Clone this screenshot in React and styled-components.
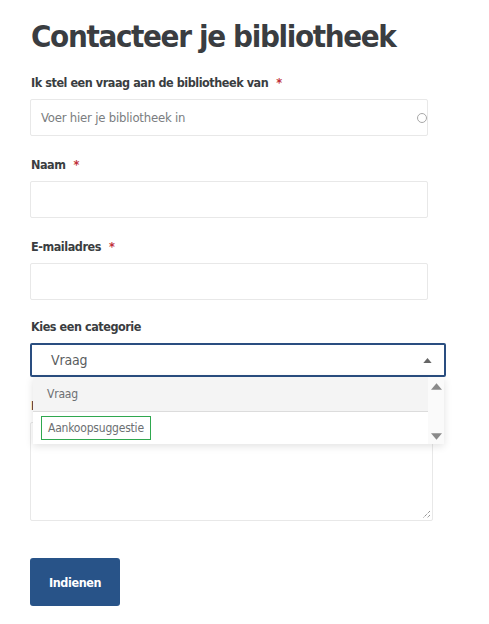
import React from "react";
import styled, { createGlobalStyle } from "styled-components";

const Global = createGlobalStyle`
  html, body { margin: 0; padding: 0; background: #fff; }
  body { font-family: "DejaVu Sans Condensed", "DejaVu Sans", sans-serif; color: #3a3d41; }
  * { box-sizing: border-box; }
`;

const Page = styled.div`
  padding: 15px 0 0 30px;
  width: 489px;
`;

const Title = styled.h1`
  margin: 0 0 0 1px;
  font-size: 31px;
  line-height: 42px;
  letter-spacing: -1.35px;
  font-weight: 700;
  color: #3a3d41;
`;

const Form = styled.form`
  display: flex;
  flex-direction: column;
  margin-top: 18px;
`;

const Field = styled.div`
  display: flex;
  flex-direction: column;
  margin-bottom: ${p => p.$gap ?? 21}px;
  position: relative;
`;

const Label = styled.label`
  font-size: 12.5px;
  line-height: 16px;
  letter-spacing: -0.45px;
  font-weight: 700;
  color: #3a3d41;
  margin: 0 0 8px 1px;
`;

const Req = styled.span`
  color: #c0303a;
  margin-left: 8px;
`;

const InputBox = styled.div`
  width: 398px;
  height: 37px;
  border: 1px solid #e8e8e8;
  border-radius: 2px;
  display: flex;
  align-items: center;
  padding: 0 10px;
  background: #fff;
`;

const Placeholder = styled.span`
  font-size: 13px;
  letter-spacing: -0.2px;
  color: #7a7d80;
  flex: 1;
`;

const Spinner = styled.span`
  width: 10px;
  height: 10px;
  border: 1.8px solid #a8a8a8;
  border-radius: 50%;
  margin-right: -10px;
`;

const Select = styled.div`
  width: 416px;
  height: 34px;
  border: 2px solid #2a4e80;
  border-radius: 2px;
  display: flex;
  align-items: center;
  padding: 0 12px 0 19px;
  background: #fff;
`;

const SelectValue = styled.span`
  flex: 1;
  font-size: 14px;
  letter-spacing: -0.2px;
  color: #5a5d60;
`;

const Menu = styled.div`
  position: absolute;
  top: 58px;
  left: 3px;
  width: 411px;
  background: #fff;
  box-shadow: 0 2px 8px rgba(0, 0, 0, 0.12);
  display: flex;
  z-index: 5;
`;

const Options = styled.div`
  flex: 1;
  display: flex;
  flex-direction: column;
`;

const Option = styled.div`
  height: ${p => (p.$first ? 35 : 32)}px;
  display: flex;
  align-items: center;
  padding-left: ${p => (p.$focus ? 8 : 14)}px;
  font-size: 12px;
  letter-spacing: -0.2px;
  color: #6c6f72;
  background: ${p => (p.$first ? "#f4f4f4" : "#fff")};
  border-bottom: ${p => (p.$first ? "1px solid #dcdcdc" : "none")};
`;

const FocusRing = styled.span`
  display: inline-flex;
  align-items: center;
  height: 24px;
  padding: 0 6px;
  border: 1px solid #2fa84f;
`;

const Scrollbar = styled.div`
  width: 16px;
  background: #fafafa;
  display: flex;
  flex-direction: column;
  justify-content: space-between;
  align-items: center;
  padding: 6px 0 4px;
`;

const Textarea = styled.div`
  width: 403px;
  height: 99px;
  border: 1px solid #e8e8e8;
  border-radius: 2px;
  position: relative;
`;

const Grip = styled.svg`
  position: absolute;
  right: 1px;
  bottom: 1px;
`;

const Button = styled.button`
  margin-top: 16px;
  width: 90px;
  height: 48px;
  background: #285388;
  border: none;
  border-radius: 3px;
  color: #fff;
  font-family: inherit;
  font-size: 12.5px;
  letter-spacing: -0.4px;
  font-weight: 700;
  padding: 0;
  align-self: flex-start;
`;

const Tri = ({ up, color = "#666", w = 10, h = 6 }) => (
  <svg width={w} height={h} viewBox="0 0 10 6">
    {up ? <path d="M0 6 L5 0 L10 6 Z" fill={color} /> : <path d="M0 0 L5 6 L10 0 Z" fill={color} />}
  </svg>
);

export default function App() {
  return (
    <>
      <Global />
      <Page>
        <Title>Contacteer je bibliotheek</Title>
        <Form>
          <Field>
            <Label>Ik stel een vraag aan de bibliotheek van<Req>*</Req></Label>
            <InputBox>
              <Placeholder>Voer hier je bibliotheek in</Placeholder>
              <Spinner />
            </InputBox>
          </Field>
          <Field>
            <Label>Naam<Req>*</Req></Label>
            <InputBox />
          </Field>
          <Field $gap={19}>
            <Label>E-mailadres<Req>*</Req></Label>
            <InputBox />
          </Field>
          <Field>
            <Label>Kies een categorie</Label>
            <Select>
              <SelectValue>Vraag</SelectValue>
              <Tri up color="#666" w={9} h={5} />
            </Select>
            <Menu>
              <Options>
                <Option $first>Vraag</Option>
                <Option $focus><FocusRing>Aankoopsuggestie</FocusRing></Option>
              </Options>
              <Scrollbar>
                <Tri up color="#8a8a8a" w={11} h={7} />
                <Tri color="#8a8a8a" w={11} h={7} />
              </Scrollbar>
            </Menu>
          </Field>
          <Field>
            <Label>Inhoud van je vraag<Req>*</Req></Label>
            <Textarea>
              <Grip width="10" height="10" viewBox="0 0 10 10">
                <path d="M9 2 L2 9 M9 6 L6 9" stroke="#666" strokeWidth="1" strokeDasharray="1 1" />
              </Grip>
            </Textarea>
          </Field>
          <Button type="button">Indienen</Button>
        </Form>
      </Page>
    </>
  );
}
